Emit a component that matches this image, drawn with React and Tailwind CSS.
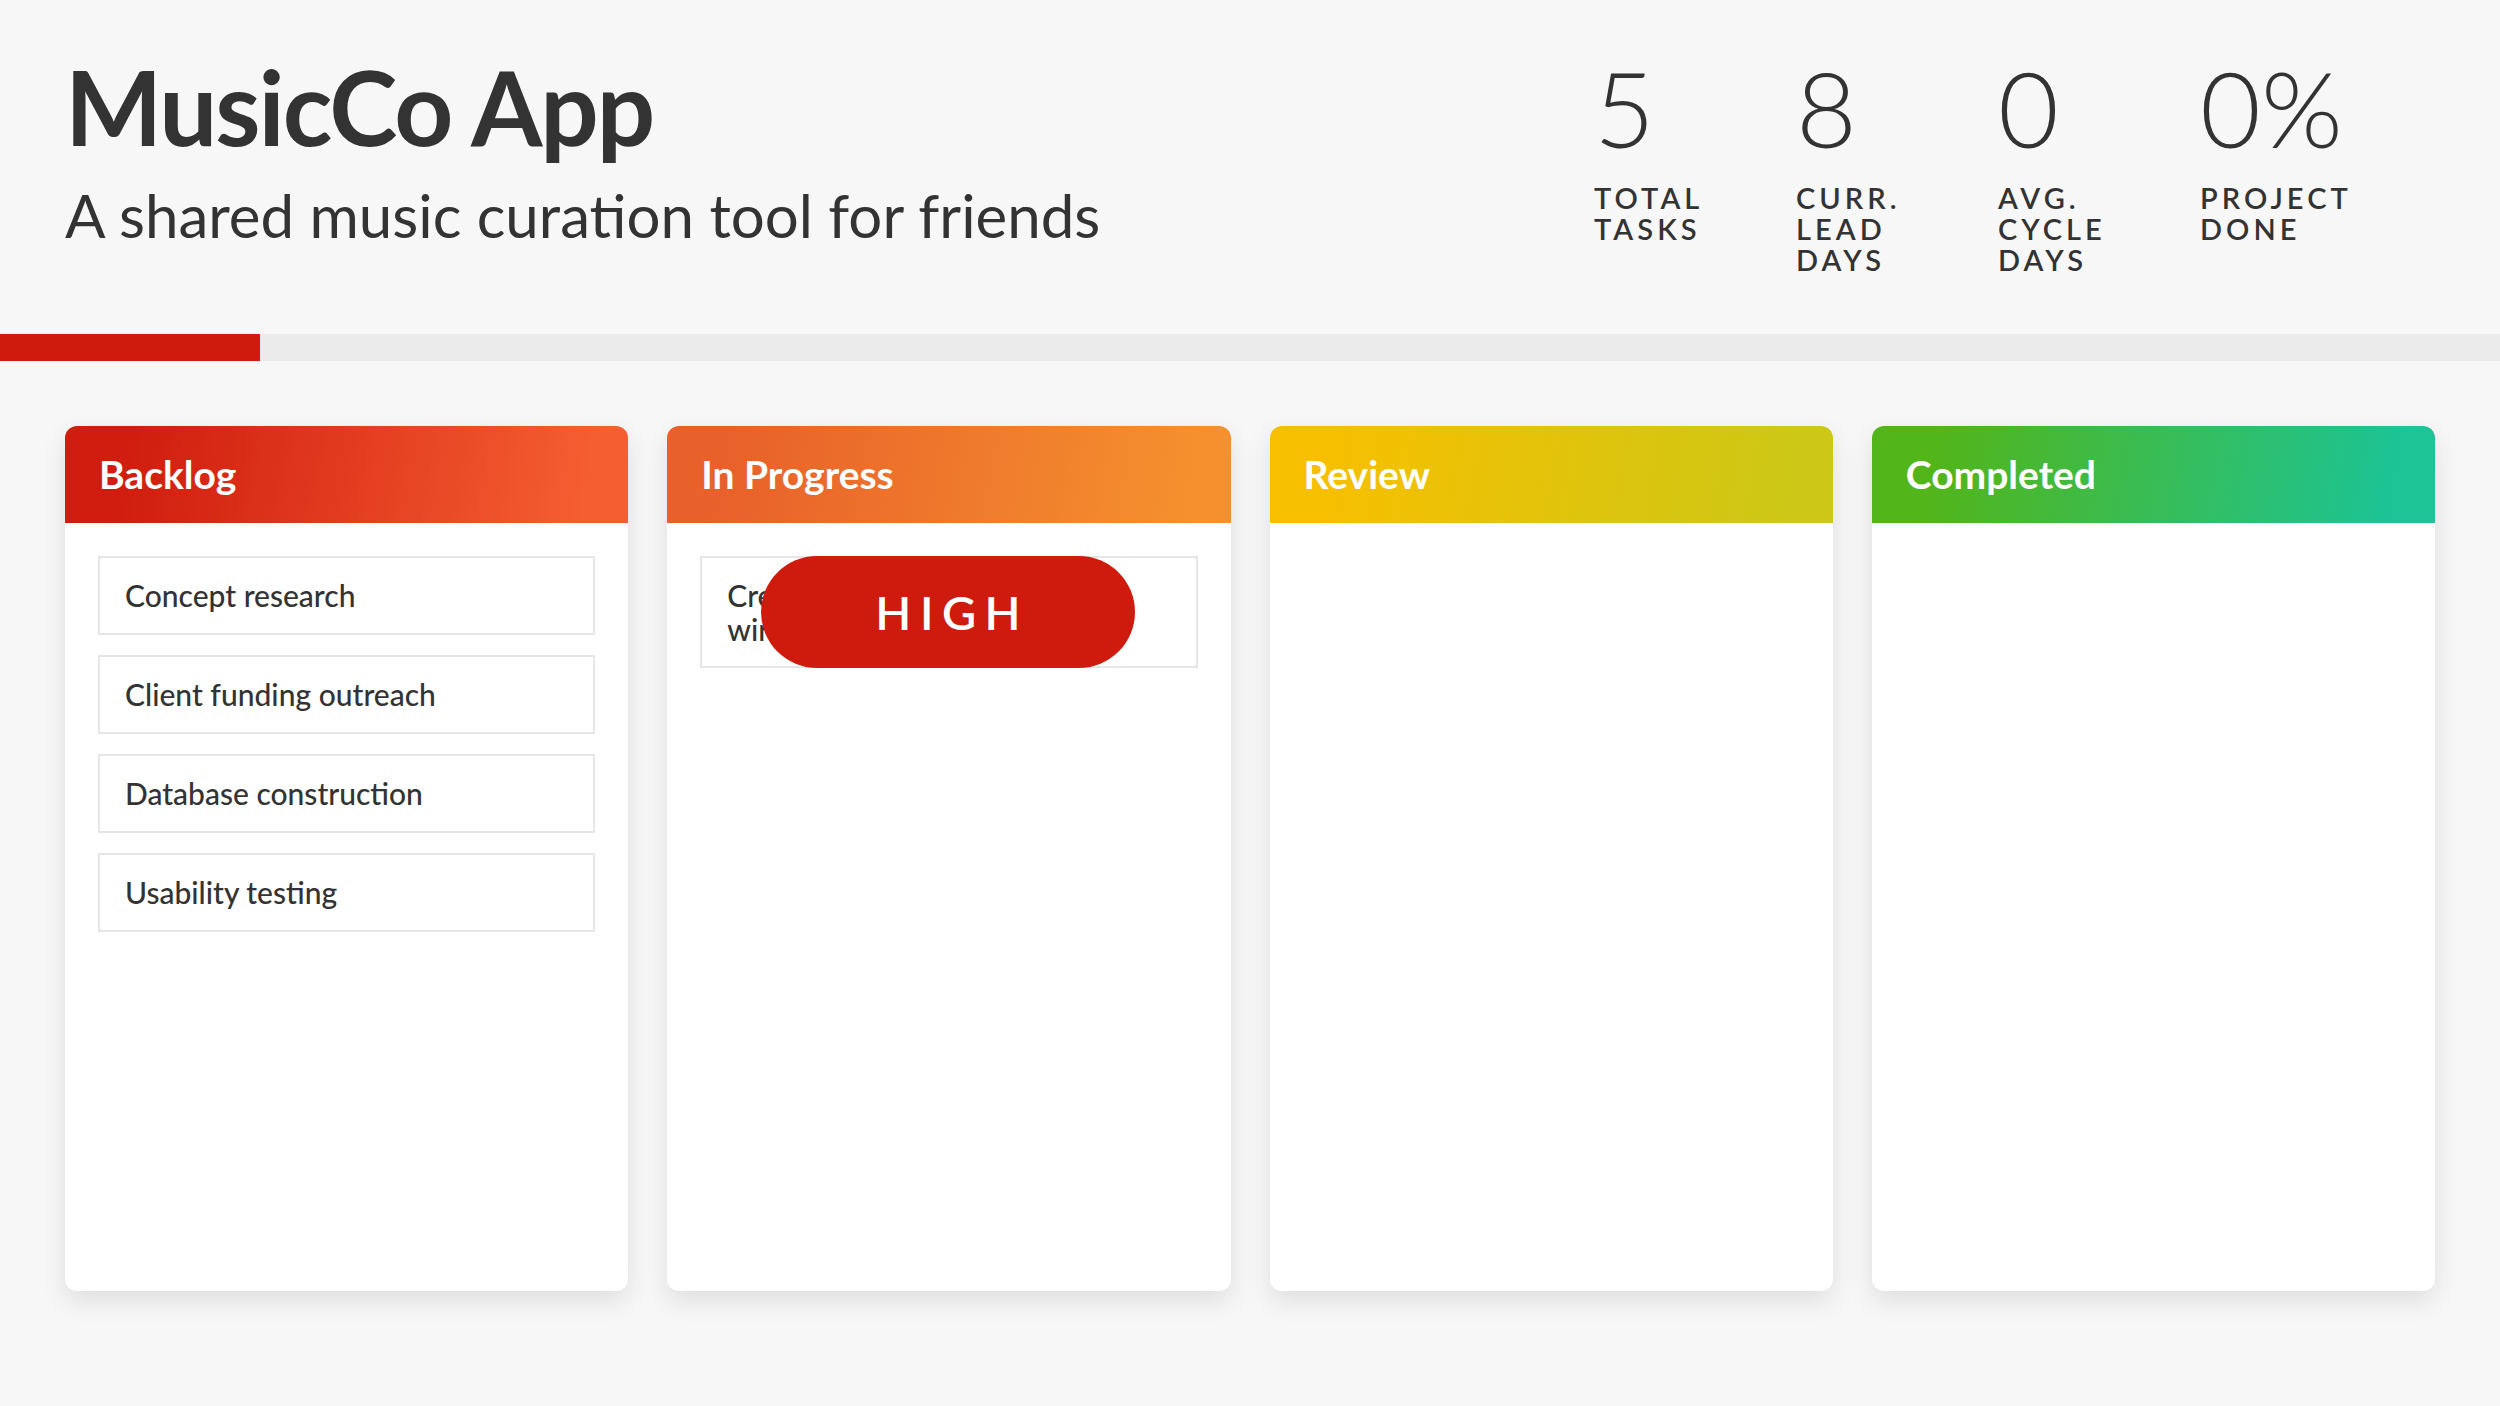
import React from "react";

const stats = [
  { value: "5", label: ["TOTAL", "TASKS"] },
  { value: "8", label: ["CURR.", "LEAD", "DAYS"] },
  { value: "0", label: ["AVG.", "CYCLE", "DAYS"] },
  { value: "0%", label: ["PROJECT", "DONE"] },
];

function TaskCard({ children }) {
  return (
    <div className="border-2 border-[#e6e6e6] bg-white py-[20px] pl-[25px] pr-[20px] text-[30px] leading-[35px] font-medium text-[#333]">
      {children}
    </div>
  );
}

function Column({ title, headerClass, children }) {
  return (
    <section className="flex h-[865px] flex-1 flex-col overflow-hidden rounded-[12px] bg-white shadow-[0_10px_26px_rgba(0,0,0,0.10)]">
      <div className={`flex h-[97px] shrink-0 items-center px-[34px] ${headerClass}`}>
        <h2 className="text-[39px] font-bold leading-none text-white">{title}</h2>
      </div>
      <div className="flex flex-col gap-[20px] p-[33px]">{children}</div>
    </section>
  );
}

export default function App() {
  return (
    <div className="min-h-screen w-full bg-[#f7f7f7] font-['Lato',sans-serif] text-[#333]">
      <header className="flex h-[334px] justify-between pl-[65px] pr-[98px] pt-[55px]">
        <div>
          <h1 className="text-[103px] font-bold leading-none tracking-[-0.02em] text-[#333]">
            MusicCo App
          </h1>
          <p className="mt-[27px] text-[60px] font-normal leading-none text-[#333]">
            A shared music curation tool for friends
          </p>
        </div>
        <div className="flex">
          {stats.map((s) => (
            <div key={s.label.join()} className="w-[202px]">
              <div className="text-[105px] font-light leading-none text-[#333]">{s.value}</div>
              <div className="mt-[22px] text-[29px] font-semibold leading-[31px] tracking-[0.14em] text-[#333]">
                {s.label.map((l) => (
                  <div key={l}>{l}</div>
                ))}
              </div>
            </div>
          ))}
        </div>
      </header>

      <div className="h-[27px] w-full bg-[#ebebeb]">
        <div className="h-full w-[260px] bg-[#cf1b0e]" />
      </div>

      <main className="flex gap-[39px] px-[65px] pt-[65px]">
        <Column
          title="Backlog"
          headerClass="bg-[linear-gradient(100deg,#d01d0f_12%,#f55e31_92%)]"
        >
          <TaskCard>Concept research</TaskCard>
          <TaskCard>Client funding outreach</TaskCard>
          <TaskCard>Database construction</TaskCard>
          <TaskCard>Usability testing</TaskCard>
        </Column>
        <Column
          title="In Progress"
          headerClass="bg-[linear-gradient(100deg,#e8602a_10%,#f5902e_92%)]"
        >
          <div className="relative">
            <div className="border-2 border-[#e6e6e6] bg-white py-[20px] pl-[25px] pr-[20px] text-[30px] leading-[34px] font-medium text-[#333]">
              Create mockups and
              <br />
              wireframes
            </div>
            <div className="absolute left-[61px] top-0 flex h-full w-[374px] items-center justify-center rounded-full bg-[#cf1b0e] pl-[8px] text-[47px] font-semibold leading-none tracking-[0.18em] text-white">
              HIGH
            </div>
          </div>
        </Column>
        <Column
          title="Review"
          headerClass="bg-[linear-gradient(100deg,#f6bf00_12%,#cdc817_92%)]"
        />
        <Column
          title="Completed"
          headerClass="bg-[linear-gradient(100deg,#52b51a_12%,#1cc496_92%)]"
        />
      </main>
    </div>
  );
}
